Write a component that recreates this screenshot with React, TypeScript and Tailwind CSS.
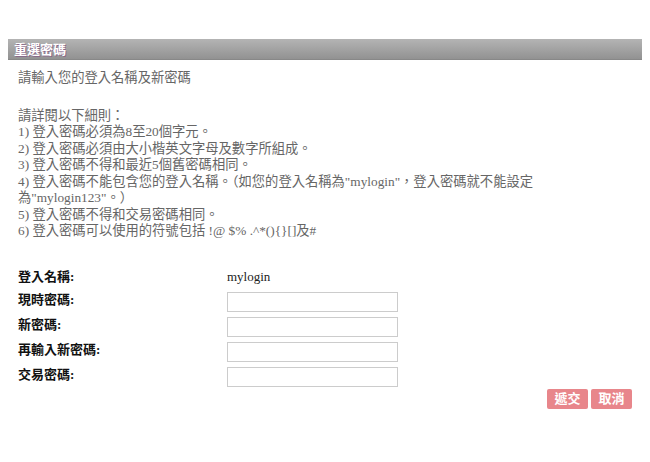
import React from "react";

const rules = [
  "1) 登入密碼必須為8至20個字元。",
  "2) 登入密碼必須由大小楷英文字母及數字所組成。",
  "3) 登入密碼不得和最近5個舊密碼相同。",
];

const fields = ["現時密碼:", "新密碼:", "再輸入新密碼:", "交易密碼:"];

export default function App() {
  return (
    <div
      className="w-[650px] h-[462px] bg-white pt-[39px] px-[8px]"
      style={{ fontFamily: '"Liberation Serif", "Noto Sans CJK TC", serif' }}
    >
      {/* Title bar */}
      <div className="h-[21px] flex items-center px-[6px] bg-gradient-to-b from-[#b4b4b4] to-[#929292] border-b border-[#888]">
        <span className="text-white font-bold text-[13px] leading-none [text-shadow:1px_1px_0_#8a6a8a]">
          重選密碼
        </span>
      </div>

      <div className="pl-[10px] pr-[10px] text-[13.3px] text-[#666] leading-[16.5px]">
        <p className="mt-[10px]">請輸入您的登入名稱及新密碼</p>

        <div className="mt-[21px]">
          <p>請詳閱以下細則：</p>
          {rules.map((r) => (
            <p key={r}>{r}</p>
          ))}
          <p>
            4) 登入密碼不能包含您的登入名稱。（如您的登入名稱為"mylogin"，登入密碼就不能設定
            <br />
            為"mylogin123"。）
          </p>
          <p>5) 登入密碼不得和交易密碼相同。</p>
          <p>6) 登入密碼可以使用的符號包括 !@ $% .^*(){"{}"}[]及#</p>
        </div>

        {/* Form */}
        <div className="mt-[25px] text-[#111] text-[13px]">
          <div className="flex items-center h-[25px]">
            <span className="w-[209px] font-bold">登入名稱:</span>
            <span className="text-[#222]">mylogin</span>
          </div>
          {fields.map((f) => (
            <div key={f} className="flex items-center h-[25px]">
              <span className="w-[209px] font-bold -mt-[3px]">{f}</span>
              <input
                type="password"
                className="w-[171px] h-[20px] border border-[#ccc] bg-white outline-none"
              />
            </div>
          ))}
        </div>

        <div className="flex justify-end gap-[3px] -mt-[1px]">
          <button className="w-[41px] h-[20px] rounded-[2px] bg-[#e8868b] text-white font-bold text-[13px] leading-none">
            遞交
          </button>
          <button className="w-[41px] h-[20px] rounded-[2px] bg-[#e8868b] text-white font-bold text-[13px] leading-none">
            取消
          </button>
        </div>
      </div>
    </div>
  );
}
